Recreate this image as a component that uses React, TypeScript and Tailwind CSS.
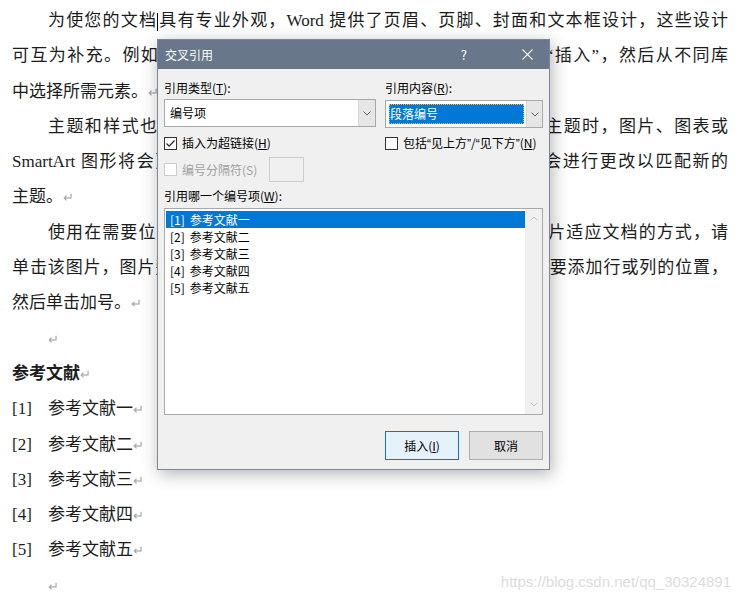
const serif = "font-['Liberation_Serif','Noto_Sans_CJK_SC',serif]";
const ui = "font-['Noto_Sans_CJK_SC','Liberation_Sans',sans-serif]";

function Mark(): React.ReactElement {
  return <span className="text-[13px] text-[#a6a6a6]">↵</span>;
}

function Line({ children, indent = false, full = false }: { children: React.ReactNode; indent?: boolean; full?: boolean }): React.ReactElement {
  return (
    <div
      className={`h-[35.3px] leading-[35.3px] ${indent ? "pl-[36px]" : ""} ${
        full ? "text-justify [text-align-last:justify]" : ""
      }`}
    >
      {children}
    </div>
  );
}

function Chevron({ up = false, color = "#606060" }: { up?: boolean; color?: string }): React.ReactElement {
  return (
    <svg width="8" height="5" viewBox="0 0 8 5" className={up ? "rotate-180" : ""}>
      <path d="M0.5 0.5 L4 4 L7.5 0.5" fill="none" stroke={color} strokeWidth="1" />
    </svg>
  );
}

function CheckBox({ checked = false, disabled = false }: { checked?: boolean; disabled?: boolean }): React.ReactElement {
  return (
    <span
      className={`flex h-[13px] w-[13px] shrink-0 items-center justify-center border bg-white ${
        disabled ? "border-[#cccccc]" : "border-[#333333]"
      }`}
    >
      {checked && (
        <svg width="11" height="11" viewBox="0 0 11 11">
          <path d="M1.5 5.5 L4.2 8.2 L9.5 2.5" fill="none" stroke="#222" strokeWidth="1.2" />
        </svg>
      )}
    </span>
  );
}

// narrow curly quotes, as the dialog font draws them
function Q({ c }: { c: string }): React.ReactElement {
  return <span className="font-['Liberation_Sans',sans-serif]">{c}</span>;
}

const refs = ["参考文献一", "参考文献二", "参考文献三", "参考文献四", "参考文献五"];

function Dialog(): React.ReactElement {
  return (
    <div
      className={`absolute left-[157px] top-[39px] flex h-[431px] w-[393px] flex-col border border-[#7a8799] bg-[#f0f0f0] text-[12px] text-black shadow-[2px_4px_16px_rgba(0,0,0,0.3)] ${ui}`}
    >
      {/* Title bar */}
      <div className="flex h-[29px] shrink-0 items-center bg-[#687789] pl-[7px] text-white">
        <span className="text-[12px]">交叉引用</span>
        <span className="ml-auto mr-[55px] text-[13px]">?</span>
        <svg width="11" height="11" viewBox="0 0 11 11" className="mr-[16px]">
          <path d="M0.5 0.5 L10.5 10.5 M10.5 0.5 L0.5 10.5" stroke="white" strokeWidth="1.1" />
        </svg>
      </div>

      <div className="flex flex-1 flex-col px-[6px]">
        <div className="mt-[11px] grid grid-cols-[212px_158px] gap-x-[9px]">
          <div className="h-[16px] leading-[16px]">
            引用类型(<span className="underline">T</span>):
          </div>
          <div className="h-[16px] leading-[16px]">
            引用内容(<span className="underline">R</span>):
          </div>

          {/* Selects */}
          <div className="mt-[3px] flex h-[28px] border border-[#a8a8a8] bg-white">
            <div className="flex flex-1 items-center pl-[5px]">编号项</div>
            <div className="flex w-[17px] items-center justify-center border-l border-[#d8d8d8] bg-[#e6e6e6]">
              <Chevron />
            </div>
          </div>
          <div className="mt-[4px] flex h-[28px] border border-[#a8a8a8] bg-white">
            <div className="flex flex-1 items-center p-[3px] pr-[2px]">
              <div className="flex h-full w-full items-center bg-[#0078d7] pl-[1px] text-white outline-1 outline-dotted outline-[#ffb347] -outline-offset-1">
                段落编号
              </div>
            </div>
            <div className="flex w-[16px] items-center justify-center border-l border-[#d8d8d8] bg-[#e6e6e6]">
              <Chevron />
            </div>
          </div>

          {/* Checkboxes */}
          <div className="mt-[7px] flex h-[16px] items-center gap-[5px]">
            <CheckBox checked />
            <span>
              插入为超链接(<span className="underline">H</span>)
            </span>
          </div>
          <div className="mt-[7px] flex h-[16px] items-center gap-[5px] whitespace-nowrap">
            <CheckBox />
            <span>
              包括<Q c="“" />见上方<Q c="”" />/<Q c="“" />见下方<Q c="”" />(<span className="underline">N</span>)
            </span>
          </div>

          <div className="mt-[6px] flex h-[25px] items-center">
            <CheckBox disabled />
            <span className="ml-[5px] text-[#a0a0a0]">编号分隔符(S)</span>
            <div className="ml-[12px] h-[25px] w-[35px] border border-[#cccccc] bg-[#f0f0f0]" />
          </div>
          <div />
        </div>

        <div className="mt-[6px] h-[16px] leading-[16px]">
          引用哪一个编号项(<span className="underline">W</span>):
        </div>

        {/* List box */}
        <div className="mt-[4px] flex h-[207px] border border-[#a8a8a8] bg-white">
          <div className="flex-1 pl-[1px] pt-[2px]">
            {refs.map((r, i) => (
              <div
                key={r}
                className={`flex h-[17px] items-center gap-[5px] pl-[4px] leading-[17px] ${
                  i === 0 ? "bg-[#0078d7] text-white" : ""
                }`}
              >
                <span>[{i + 1}]</span>
                <span>{r}</span>
              </div>
            ))}
          </div>
          <div className="flex w-[17px] flex-col items-center justify-between bg-[#f0f0f0] py-[7px]">
            <Chevron up color="#c0c0c0" />
            <Chevron color="#c0c0c0" />
          </div>
        </div>

        {/* Buttons */}
        <div className="mt-[16px] flex justify-end gap-[10px]">
          <button className="flex h-[29px] w-[74px] items-center justify-center border border-[#0078d7] bg-[#e5f1fb]">
            插入(<span className="underline">I</span>)
          </button>
          <button className="flex h-[29px] w-[74px] items-center justify-center border border-[#adadad] bg-[#e1e1e1]">
            取消
          </button>
        </div>
      </div>
    </div>
  );
}

export default function App(): React.ReactElement {
  return (
    <div className={`relative h-[601px] w-[740px] overflow-hidden bg-white ${serif}`}>
      <div className="px-[12px] pt-[3px] text-[17px] text-[#1c1c1c]">
        <Line indent full>
          为使您的文档
          <span className="inline-block h-[18px] w-px bg-black align-middle" />
          具有专业外观，Word 提供了页眉、页脚、封面和文本框设计，这些设计
        </Line>
        <Line full>可互为补充。例如，您可以添加匹配的封面、页眉和提要栏。单击“插入”，然后从不同库</Line>
        <Line>
          中选择所需元素。
          <Mark />
        </Line>
        <Line indent full>
          主题和样式也有助于文档保持协调。当您单击设计并选择新的主题时，图片、图表或
        </Line>
        <Line full>SmartArt 图形将会更改以匹配新的主题。当应用样式时，您的标题会进行更改以匹配新的</Line>
        <Line>
          主题。
          <Mark />
        </Line>
        <Line indent full>
          使用在需要位置出现的新按钮在 Word 中保存时间。若要更改图片适应文档的方式，请
        </Line>
        <Line full>单击该图片，图片旁边将会显示布局选项按钮。当处理表格时，单击要添加行或列的位置，</Line>
        <Line>
          然后单击加号。
          <Mark />
        </Line>
        <Line indent>
          <Mark />
        </Line>
        <Line>
          <span className="font-bold">参考文献</span>
          <Mark />
        </Line>
        {refs.map((r, i) => (
          <Line key={r}>
            <span className="inline-block w-[36px]">[{i + 1}]</span>
            {r}
            <Mark />
          </Line>
        ))}
        <Line indent>
          <Mark />
        </Line>
      </div>

      <Dialog />

      {/* Watermark */}
      <div className="absolute right-[9px] top-[572px] font-['Liberation_Sans',sans-serif] text-[15px] leading-[20px] text-[#dcdcdc]">
        https://blog.csdn.net/qq_30324891
      </div>
    </div>
  );
}
